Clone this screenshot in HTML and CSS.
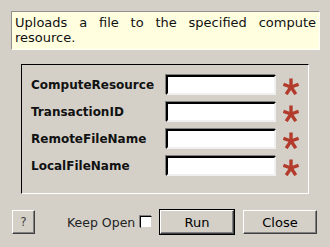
FILE: index.html
```html
<!DOCTYPE html>
<html lang="en">
<head>
  <meta charset="UTF-8" />
  <title>Upload File</title>
  <link rel="stylesheet" href="styles.css">
</head>
<body>
  <div class="desc">Uploads a file to the specified compute resource.</div>

  <div class="group">
    <div class="label">ComputeResource</div>
    <div class="field"></div>
    <svg class="req" viewBox="0 0 16 17"><g stroke="#b33b2c" stroke-width="3.4"><line x1="8" y1="9" x2="8" y2="0.5"/><line x1="8" y1="9" x2="15.6" y2="6.4"/><line x1="8" y1="9" x2="0.4" y2="6.4"/><line x1="8" y1="9" x2="12.8" y2="16.2"/><line x1="8" y1="9" x2="3.2" y2="16.2"/></g></svg>

    <div class="label">TransactionID</div>
    <div class="field"></div>
    <svg class="req" viewBox="0 0 16 17"><g stroke="#b33b2c" stroke-width="3.4"><line x1="8" y1="9" x2="8" y2="0.5"/><line x1="8" y1="9" x2="15.6" y2="6.4"/><line x1="8" y1="9" x2="0.4" y2="6.4"/><line x1="8" y1="9" x2="12.8" y2="16.2"/><line x1="8" y1="9" x2="3.2" y2="16.2"/></g></svg>

    <div class="label">RemoteFileName</div>
    <div class="field"></div>
    <svg class="req" viewBox="0 0 16 17"><g stroke="#b33b2c" stroke-width="3.4"><line x1="8" y1="9" x2="8" y2="0.5"/><line x1="8" y1="9" x2="15.6" y2="6.4"/><line x1="8" y1="9" x2="0.4" y2="6.4"/><line x1="8" y1="9" x2="12.8" y2="16.2"/><line x1="8" y1="9" x2="3.2" y2="16.2"/></g></svg>

    <div class="label">LocalFileName</div>
    <div class="field"></div>
    <svg class="req" viewBox="0 0 16 17"><g stroke="#b33b2c" stroke-width="3.4"><line x1="8" y1="9" x2="8" y2="0.5"/><line x1="8" y1="9" x2="15.6" y2="6.4"/><line x1="8" y1="9" x2="0.4" y2="6.4"/><line x1="8" y1="9" x2="12.8" y2="16.2"/><line x1="8" y1="9" x2="3.2" y2="16.2"/></g></svg>
  </div>

  <div class="actions">
    <div class="btn help">?</div>
    <div class="keep">Keep Open</div>
    <div class="check"></div>
    <div class="default"><div class="btn run">Run</div></div>
    <div class="btn close">Close</div>
  </div>
</body>
</html>
```

FILE: styles.css
```css
body {
  margin: 0;
  width: 330px;
  height: 247px;
  background-color: #d4d0c8;
  font-family: "DejaVu Sans", sans-serif;
  color: #000;
  overflow: hidden;
}

.desc {
  box-sizing: border-box;
  margin: 11px 0 0 11px;
  width: 309px;
  height: 39px;
  padding: 3px 3px 0 3px;
  background-color: #ffffe0;
  border: 1px solid;
  border-color: #909090 #ffffff #ffffff #909090;
  font-size: 13px;
  line-height: 15px;
  text-align: justify;
  text-align-last: left;
  color: #111;
}

.group {
  box-sizing: border-box;
  margin: 14px 0 0 21px;
  width: 288px;
  height: 130px;
  border: 1px solid;
  border-color: #000 #fff #fff #000;
  padding: 10px 0 0 9px;
  display: grid;
  grid-template-columns: 135px 110px 16px;
  grid-auto-rows: 20px;
  row-gap: 7px;
  align-items: center;
}

.label {
  font-size: 12px;
  font-weight: bold;
  color: #111;
}

.field {
  box-sizing: border-box;
  height: 20px;
  background: #fff;
  border: 2px solid;
  border-color: #000 #f0f0f0 #f0f0f0 #000;
  box-shadow: -1px -1px 0 #808080;
}

.req {
  width: 16px;
  height: 17px;
  margin-left: 7px;
  align-self: start;
  margin-top: 3px;
}

.actions {
  display: flex;
  align-items: center;
  margin: 15px 0 0 12px;
  height: 26px;
}

.btn {
  box-sizing: border-box;
  height: 24px;
  border: 1px solid;
  border-color: #fff #404040 #404040 #fff;
  box-shadow: inset -1px -1px 0 #808080;
  display: flex;
  align-items: center;
  justify-content: center;
  font-size: 13px;
}

.help {
  width: 23px;
  font-size: 12px;
  color: #444;
}

.keep {
  width: 73px;
  margin-left: 32px;
  font-size: 12.5px;
  color: #222;
}

.check {
  box-sizing: border-box;
  width: 12px;
  height: 12px;
  background: #fff;
  border: 1px solid;
  border-color: #000 #d4d0c8 #d4d0c8 #000;
  box-shadow: -1px -1px 0 #808080;
}

.default {
  margin-left: 7px;
  border: 1px solid #000;
}

.run {
  width: 74px;
}

.close {
  width: 74px;
  margin-left: 8px;
}
```
